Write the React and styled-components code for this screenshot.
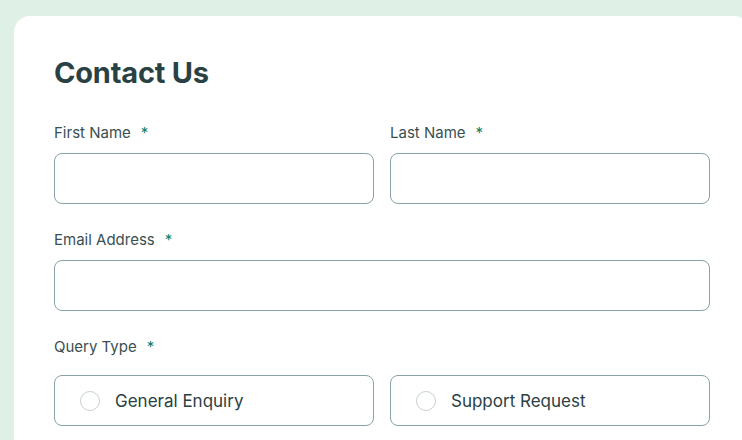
import React from 'react';
import styled, { createGlobalStyle } from 'styled-components';

const GlobalStyle = createGlobalStyle`
    html, body {
        margin: 0;
        background: #dff1e7;
        overflow: hidden;
    }
    body {
        font-family: 'Inter', 'Liberation Sans', sans-serif;
        color: #2a4144;
    }
`;

const Page = styled.div`
    padding: 16px 0 0 14px;
`;

const Card = styled.form`
    width: 736px;
    box-sizing: border-box;
    background: #fff;
    border-radius: 16px;
    padding: 40px;
`;

const Title = styled.h1`
    margin: 0 0 34px;
    font-size: 29px;
    font-weight: 700;
    line-height: 34px;
    letter-spacing: -0.2px;
    color: #2a4144;
`;

const Row = styled.div`
    display: grid;
    grid-template-columns: ${p => (p.$cols === 2 ? '1fr 1fr' : '1fr')};
    gap: 16px;
    width: 656px;
    margin-bottom: 27px;
`;

const Field = styled.div`
    display: flex;
    flex-direction: column;
`;

const Label = styled.label`
    font-size: 15px;
    line-height: 18px;
    color: #3a4f52;
    margin-bottom: ${p => (p.$group ? '19px' : '11px')};
`;

const Star = styled.span`
    color: #0c7d69;
    margin-left: 10px;
`;

const Input = styled.input`
    box-sizing: border-box;
    height: 51px;
    border: 1px solid #87a3a6;
    border-radius: 8px;
    padding: 0 24px;
    font: inherit;
    outline: none;
`;

const RadioBox = styled.label`
    box-sizing: border-box;
    height: 51px;
    display: flex;
    align-items: center;
    gap: 15px;
    padding: 0 24px 0 25px;
    border: 1px solid #87a3a6;
    border-radius: 8px;
    font-size: 17px;
    color: #2a4144;
`;

const Circle = styled.span`
    box-sizing: border-box;
    width: 20px;
    height: 20px;
    border-radius: 50%;
    border: 1.5px solid #c7d0d1;
`;

export default function App() {
    return (
        <Page>
            <GlobalStyle />
            <Card>
                <Title>Contact Us</Title>
                <Row $cols={2}>
                    <Field>
                        <Label>First Name<Star>*</Star></Label>
                        <Input type="text" />
                    </Field>
                    <Field>
                        <Label>Last Name<Star>*</Star></Label>
                        <Input type="text" />
                    </Field>
                </Row>
                <Row>
                    <Field>
                        <Label>Email Address<Star>*</Star></Label>
                        <Input type="email" />
                    </Field>
                </Row>
                <Field>
                    <Label $group>Query Type<Star>*</Star></Label>
                    <Row $cols={2}>
                        <RadioBox>
                            <Circle />
                            General Enquiry
                        </RadioBox>
                        <RadioBox>
                            <Circle />
                            Support Request
                        </RadioBox>
                    </Row>
                </Field>
            </Card>
        </Page>
    );
}
